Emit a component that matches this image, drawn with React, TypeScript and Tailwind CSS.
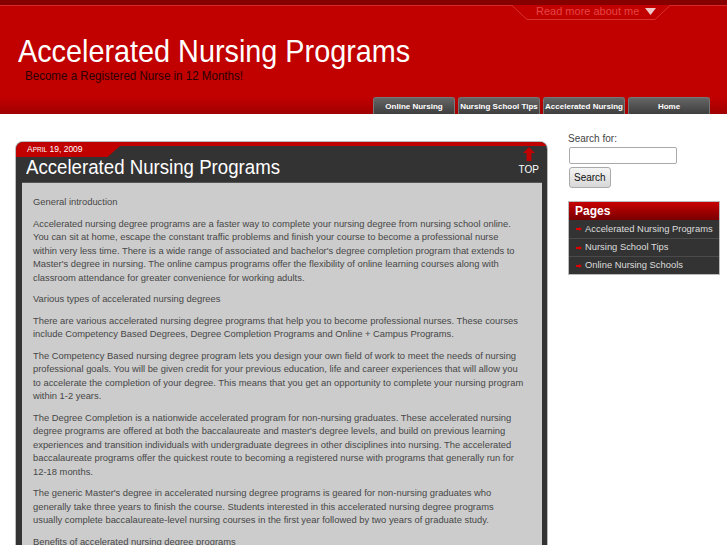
import React from 'react';

const paragraphs: string[][] = [
  ['General introduction'],
  [
    'Accelerated nursing degree programs are a faster way to complete your nursing degree from nursing school online.',
    'You can sit at home, escape the constant traffic problems and finish your course to become a professional nurse',
    "within very less time. There is a wide range of associated and bachelor's degree completion program that extends to",
    "Master's degree in nursing. The online campus programs offer the flexibility of online learning courses along with",
    'classroom attendance for greater convenience for working adults.',
  ],
  ['Various types of accelerated nursing degrees'],
  [
    'There are various accelerated nursing degree programs that help you to become professional nurses. These courses',
    'include Competency Based Degrees, Degree Completion Programs and Online + Campus Programs.',
  ],
  [
    'The Competency Based nursing degree program lets you design your own field of work to meet the needs of nursing',
    'professional goals. You will be given credit for your previous education, life and career experiences that will allow you',
    'to accelerate the completion of your degree. This means that you get an opportunity to complete your nursing program',
    'within 1-2 years.',
  ],
  [
    'The Degree Completion is a nationwide accelerated program for non-nursing graduates. These accelerated nursing',
    "degree programs are offered at both the baccalaureate and master's degree levels, and build on previous learning",
    'experiences and transition individuals with undergraduate degrees in other disciplines into nursing. The accelerated',
    'baccalaureate programs offer the quickest route to becoming a registered nurse with programs that generally run for',
    '12-18 months.',
  ],
  [
    "The generic Master's degree in accelerated nursing degree programs is geared for non-nursing graduates who",
    'generally take three years to finish the course. Students interested in this accelerated nursing degree programs',
    'usually complete baccalaureate-level nursing courses in the first year followed by two years of graduate study.',
  ],
  ['Benefits of accelerated nursing degree programs'],
];

const tabs = ['Online Nursing', 'Nursing School Tips', 'Accelerated Nursing', 'Home'];
const pages = ['Accelerated Nursing Programs', 'Nursing School Tips', 'Online Nursing Schools'];

function Header() {
  return (
    <header className="relative h-[114px] bg-gradient-to-b from-[#c10000] from-85% to-[#a00000] flex flex-col">
      {/* top band */}
      <div className="h-[5px] bg-[#860000] border-b border-[#d42a2a] box-content" />

      {/* read more tab */}
      <div className="absolute left-[512px] top-0 w-[158px] h-[21px]">
        <svg width="158" height="21" className="absolute inset-0">
          <polygon points="0,5 15,19 143,19 158,5" fill="#c10000" />
          <polyline points="0,5.5 15,19.5 143,19.5 158,5.5" fill="none" stroke="#d93030" strokeWidth="1" />
        </svg>
        <div className="relative flex items-center gap-[6px] pl-[24px] pt-[5px] text-[11px] leading-[13px] text-[#e54545]">
          <span>Read more about me</span>
          <svg width="11" height="8" viewBox="0 0 11 8">
            <polygon points="0,0 11,0 5.5,7" fill="#f0c8c8" />
          </svg>
        </div>
      </div>

      <h1 className="mt-[29px] ml-[18px] text-[32px] leading-[32px] text-white whitespace-nowrap origin-left scale-x-[0.9]">
        Accelerated Nursing Programs
      </h1>
      <p className="ml-[25px] mt-[1px] text-[13px] leading-[16px] text-[#2a0000] whitespace-nowrap origin-left scale-x-[0.89]">
        Become a Registered Nurse in 12 Months!
      </p>

      <nav className="mt-auto flex justify-end gap-[3px] pr-[17px]">
        {tabs.map((t) => (
          <a
            key={t}
            className="w-[82px] h-[17px] rounded-t-[3px] bg-gradient-to-b from-[#666] to-[#3e3e3e] border border-b-0 border-[#777] text-white text-[8px] font-bold leading-[17px] text-center whitespace-nowrap overflow-hidden"
          >
            {t}
          </a>
        ))}
      </nav>
    </header>
  );
}

function Post() {
  return (
    <article className="w-[531px] rounded-t-[7px] bg-[#333] shadow-[0_0_0_1px_#bbb] overflow-hidden">
      <div className="h-[4px] bg-[#c10000]" />
      <div className="relative h-[36px]">
        <div className="absolute left-0 top-0 h-[11px] w-[104px] bg-[#c10000] [clip-path:polygon(0_0,100%_0,88%_100%,0_100%)]" />
        <div className="absolute left-[11px] top-[-3px] text-[8.5px] leading-[12px] text-white">
          A<span className="text-[6.5px]">PRIL</span> 19, 2009
        </div>
        <h2 className="absolute left-[10px] top-[9px] text-[20.5px] leading-[24px] text-white whitespace-nowrap origin-left scale-x-[0.91]">
          Accelerated Nursing Programs
        </h2>
        <div className="absolute right-[8px] top-[1px] flex flex-col items-center">
          <svg width="12" height="14" viewBox="0 0 12 14">
            <polygon points="6,0 12,6 8.5,6 8.5,14 3.5,14 3.5,6 0,6" fill="#c10000" />
          </svg>
          <span className="mt-[3px] text-[10px] leading-[11px] text-white">TOP</span>
        </div>
      </div>
      <div className="ml-[6px] mr-[5px] bg-[#cccccc] border-t border-[#555] px-[11px] pt-[12px] pb-[20px] text-[9.4px] leading-[13.5px] text-[#474747]">
        {paragraphs.map((lines, i) => (
          <p key={i} className="mb-[8px] whitespace-nowrap">
            {lines.map((l, j) => (
              <span key={j}>
                {l}
                {j < lines.length - 1 && <br />}
              </span>
            ))}
          </p>
        ))}
      </div>
    </article>
  );
}

function Sidebar() {
  return (
    <aside className="w-[152px] pt-[18px]">
      <div className="text-[10px] leading-[13px] text-[#444]">Search for:</div>
      <input
        className="block mt-[2px] ml-[1px] w-[108px] h-[17px] bg-white border border-[#aaa] rounded-[2px]"
        aria-label="Search"
      />
      <button className="block mt-[3px] ml-[1px] h-[21px] px-[4px] text-[10px] text-[#111] bg-gradient-to-b from-[#f4f4f4] to-[#d8d8d8] border border-[#aaa] rounded-[3px]">
        Search
      </button>
      <div className="mt-[13px] border border-[#bbb] bg-[#333]">
        <div className="h-[18px] bg-gradient-to-b from-[#c80000] to-[#7a0000] px-[6px] text-[12px] leading-[18px] font-bold text-white">
          Pages
        </div>
        {pages.map((p, i) => (
          <div
            key={p}
            className={`flex items-center h-[18px] pl-[7px] text-[9.4px] text-[#ddd] whitespace-nowrap ${i > 0 ? 'border-t border-[#4a4a4a]' : ''}`}
          >
            <svg width="6" height="4" viewBox="0 0 6 4" className="mr-[3px] shrink-0">
              <polygon points="0,1 3,1 3,0 6,2 3,4 3,3 0,3" fill="#e00000" />
            </svg>
            {p}
          </div>
        ))}
      </div>
    </aside>
  );
}

export default function App() {
  return (
    <div className="w-[727px] h-[545px] overflow-hidden bg-white font-['Liberation_Sans',Arial,sans-serif]">
      <Header />
      <main className="flex pl-[16px] gap-[21px]">
        <div className="pt-[28px]">
          <Post />
        </div>
        <Sidebar />
      </main>
    </div>
  );
}
